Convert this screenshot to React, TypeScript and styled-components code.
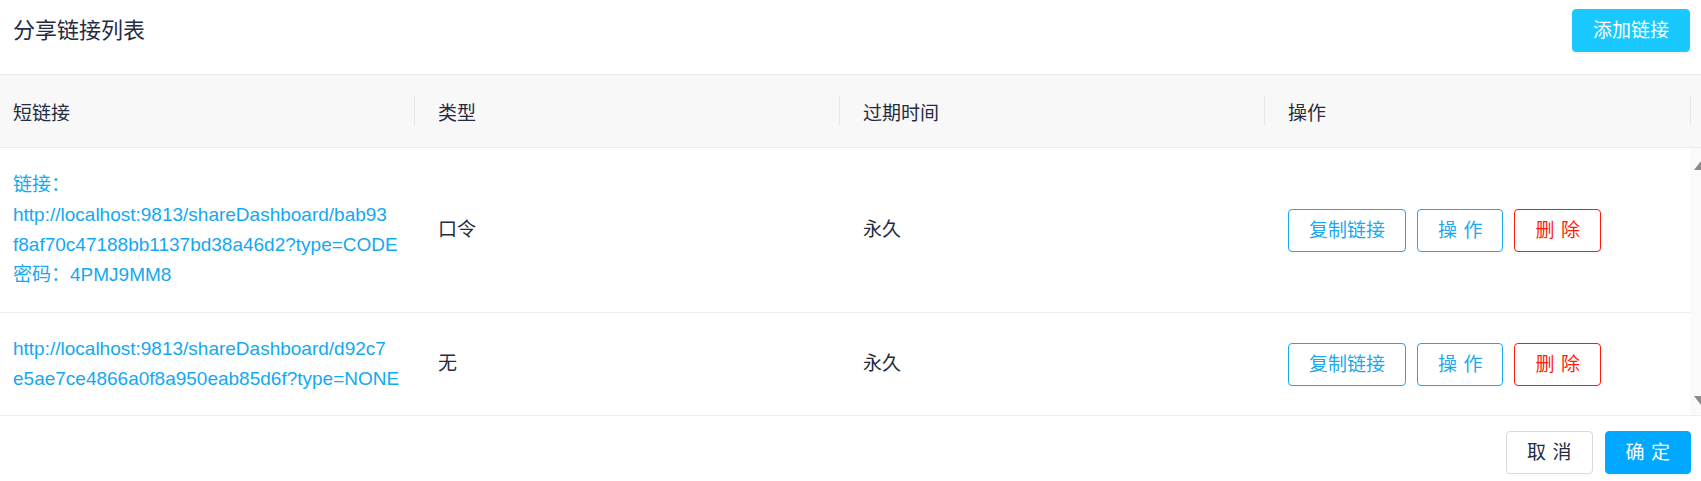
import React from "react";
import styled, { createGlobalStyle, css } from "styled-components";

const GlobalStyle = createGlobalStyle`
  html, body {
    margin: 0;
    padding: 0;
    background: #ffffff;
  }
  body {
    font-family: "Liberation Sans", "Noto Sans CJK SC", sans-serif;
    color: #262b40;
  }
  * { box-sizing: border-box; }
`;

const Page = styled.div`
  width: 1701px;
  height: 481px;
  overflow: hidden;
  display: flex;
  flex-direction: column;
`;

const TopBar = styled.div`
  height: 74px;
  display: flex;
  justify-content: space-between;
  align-items: flex-start;
  padding: 9px 11px 0 13px;
`;

const Title = styled.h2`
  margin: 0;
  font-size: 22px;
  font-weight: 400;
  line-height: 44px;
  color: #262b40;
`;

const Button = styled.button<{ $variant?: "primary" | "outline" | "danger" | "default" | "add"; $spaced?: boolean }>`
  height: 43px;
  padding: 0 20px;
  border-radius: 4px;
  border: 1px solid #d9d9d9;
  background: #ffffff;
  font-family: "Liberation Sans", "Noto Sans CJK SC", sans-serif;
  font-size: 19px;
  line-height: 41px;
  color: #262b40;
  cursor: pointer;
  white-space: nowrap;
  box-shadow: 0 2px 0 rgba(0, 0, 0, 0.015);

  ${(p) =>
    p.$variant === "add" &&
    css`
      background: #18c8ff;
      border-color: #18c8ff;
      color: #ffffff;
      box-shadow: 0 2px 0 rgba(0, 0, 0, 0.045);
    `}
  ${(p) =>
    p.$variant === "primary" &&
    css`
      background: #00a8ff;
      border-color: #00a8ff;
      color: #ffffff;
      box-shadow: 0 2px 0 rgba(0, 0, 0, 0.045);
    `}
  ${(p) =>
    p.$variant === "outline" &&
    css`
      border-color: #1aa9ee;
      color: #1aa9ee;
    `}
  ${(p) =>
    p.$variant === "danger" &&
    css`
      border-color: #ff1a0a;
      color: #ff1a0a;
    `}
  ${(p) =>
    p.$spaced &&
    css`
      letter-spacing: 0.34em;
      & > span {
        margin-right: -0.34em;
      }
    `}
`;

const HeaderRow = styled.div`
  display: grid;
  grid-template-columns: 425px 425px 425px 1fr;
  height: 74px;
  background: #f8f8f8;
  border-top: 1px solid #ebebeb;
  border-bottom: 1px solid #ebebeb;
`;

const HeaderCell = styled.div`
  position: relative;
  display: flex;
  align-items: center;
  padding: 0 13px;
  font-size: 19px;
  color: #262b40;

  &::after {
    content: "";
    position: absolute;
    right: 10px;
    top: 50%;
    width: 1px;
    height: 30px;
    margin-top: -15px;
    background: #e8e8e8;
  }
`;

const Body = styled.div`
  display: flex;
`;

const Rows = styled.div`
  flex: 1;
  display: flex;
  flex-direction: column;
`;

const Row = styled.div<{ $pad: number }>`
  display: grid;
  grid-template-columns: 425px 425px 425px 1fr;
  padding: ${(p) => p.$pad}px 0;
  border-bottom: 1px solid #efefef;
`;

const Cell = styled.div`
  display: flex;
  align-items: center;
  padding: 0 13px;
  font-size: 19px;
  line-height: 30px;
  color: #262b40;
`;

const LinkText = styled.div`
  font-size: 19px;
  line-height: 30px;
  color: #14a8f0;
  white-space: nowrap;
`;

const Actions = styled.div`
  display: flex;
  align-items: center;
  gap: 11px;
`;

const ScrollTrack = styled.div`
  position: relative;
  width: 11px;
  background: #fafafa;
  overflow: hidden;
  border-bottom: 1px solid #efefef;
`;

const Arrow = styled.span<{ $dir: "up" | "down" }>`
  position: absolute;
  left: 4px;
  width: 0;
  height: 0;
  border-left: 7px solid transparent;
  border-right: 7px solid transparent;
  ${(p) =>
    p.$dir === "up"
      ? css`
          top: 13px;
          border-bottom: 9px solid #8a8a8a;
        `
      : css`
          bottom: 10px;
          border-top: 9px solid #8a8a8a;
        `}
`;

const Footer = styled.div`
  display: flex;
  justify-content: flex-end;
  gap: 12px;
  padding: 15px 10px 0 0;
`;

type Item = {
  lines: string[];
  type: string;
  expire: string;
  pad: number;
};

const items: Item[] = [
  {
    lines: [
      "链接：",
      "http://localhost:9813/shareDashboard/bab93",
      "f8af70c47188bb1137bd38a46d2?type=CODE",
      "密码：4PMJ9MM8",
    ],
    type: "口令",
    expire: "永久",
    pad: 22,
  },
  {
    lines: [
      "http://localhost:9813/shareDashboard/d92c7",
      "e5ae7ce4866a0f8a950eab85d6f?type=NONE",
    ],
    type: "无",
    expire: "永久",
    pad: 21,
  },
];

export default function App() {
  return (
    <Page>
      <GlobalStyle />
      <TopBar>
        <Title>分享链接列表</Title>
        <Button $variant="add">添加链接</Button>
      </TopBar>
      <HeaderRow>
        <HeaderCell>短链接</HeaderCell>
        <HeaderCell>类型</HeaderCell>
        <HeaderCell>过期时间</HeaderCell>
        <HeaderCell>操作</HeaderCell>
      </HeaderRow>
      <Body>
        <Rows>
          {items.map((it, i) => (
            <Row key={i} $pad={it.pad}>
              <Cell>
                <LinkText>
                  {it.lines.map((l, j) => (
                    <div key={j}>{l}</div>
                  ))}
                </LinkText>
              </Cell>
              <Cell>{it.type}</Cell>
              <Cell>{it.expire}</Cell>
              <Cell>
                <Actions>
                  <Button $variant="outline">复制链接</Button>
                  <Button $variant="outline" $spaced>
                    <span>操作</span>
                  </Button>
                  <Button $variant="danger" $spaced>
                    <span>删除</span>
                  </Button>
                </Actions>
              </Cell>
            </Row>
          ))}
        </Rows>
        <ScrollTrack>
          <Arrow $dir="up" />
          <Arrow $dir="down" />
        </ScrollTrack>
      </Body>
      <Footer>
        <Button $spaced>
          <span>取消</span>
        </Button>
        <Button $variant="primary" $spaced>
          <span>确定</span>
        </Button>
      </Footer>
    </Page>
  );
}
